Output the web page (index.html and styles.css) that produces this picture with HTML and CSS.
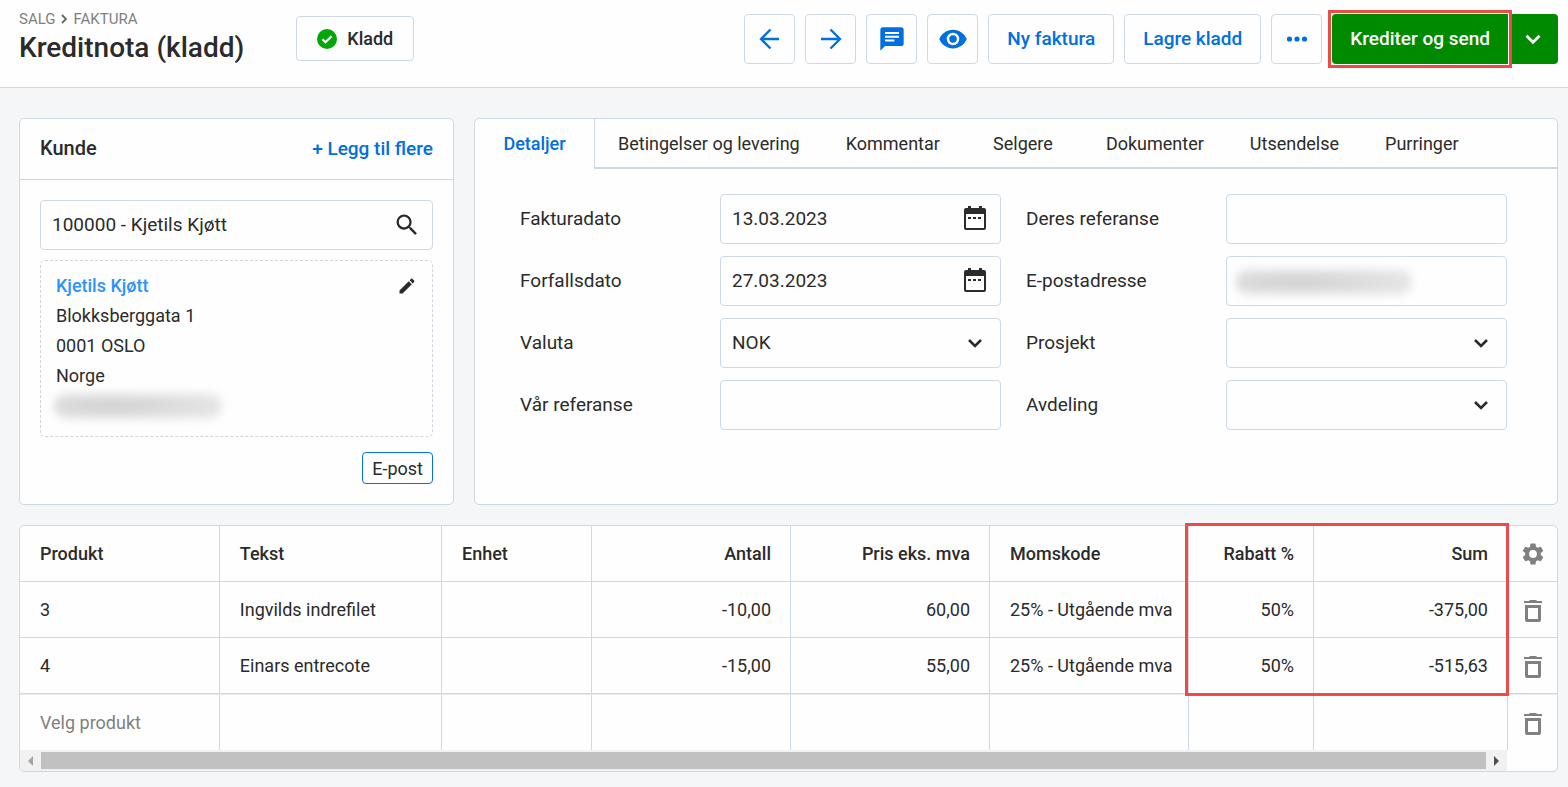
FILE: index.html
```html
<!DOCTYPE html>
<html lang="no">
  <head>
    <meta charset="UTF-8" />
    <meta name="viewport" content="width=device-width, initial-scale=1" />
    <title>Kreditnota (kladd)</title>
    <link rel="stylesheet" href="styles.css">
  </head>
  <body>
    <!-- Icons used more than once -->
    <svg class="sprite" aria-hidden="true">
      <symbol id="chevron" viewBox="0 0 24 24"><path d="M6 9l6 6 6-6" fill="none" stroke="currentColor" stroke-width="2.6" /></symbol>
      <symbol id="calendar" viewBox="0 0 24 26"><path fill="currentColor" d="M3 2h2V0h3v2h8V0h3v2h2q2 0 2 2v18q0 2-2 2H3q-2 0-2-2V4q0-2 2-2zm0 6v14h18V8zm2 3h3v2H5zm5 0h3v2h-3zm5 0h3v2h-3z" /></symbol>
      <symbol id="trash" viewBox="0 0 20 24"><path fill="currentColor" d="M1 2h5l1-1h6l1 1h5v2H1zM2 6h16v15q0 2-2 2H4q-2 0-2-2zm3 3v11h10V9z" /></symbol>
    </svg>

    <header class="topbar">
      <div class="page-title">
        <nav class="breadcrumb">
          <a href="#">SALG</a>
          <svg width="8" height="12" viewBox="0 0 8 12"><path d="M1 2l4 4-4 4" fill="none" stroke="#666" stroke-width="1.8" /></svg>
          <a href="#">FAKTURA</a>
        </nav>
        <h1>Kreditnota (kladd)</h1>
      </div>
      <div class="status">
        <svg width="20" height="20" viewBox="0 0 20 20"><circle cx="10" cy="10" r="10" fill="#00a70b" /><path d="M5.5 10.2l3 3 6-6" fill="none" stroke="#fff" stroke-width="2.2" /></svg>
        <span>Kladd</span>
      </div>

      <div class="actions">
        <button class="btn icon-btn" aria-label="Forrige">
          <svg width="24" height="24" viewBox="0 0 24 24"><path d="M21 12H3.500M12.500 2.500L3 12l9.500 9.500" fill="none" stroke="currentColor" stroke-width="2.300" /></svg>
        </button>
        <button class="btn icon-btn" aria-label="Neste">
          <svg width="24" height="24" viewBox="0 0 24 24"><path d="M2 12h18.500M11.500 2.500L21 12l-9.500 9.500" fill="none" stroke="currentColor" stroke-width="2.300" /></svg>
        </button>
        <button class="btn icon-btn" aria-label="Kommentarer">
          <svg width="28" height="28" viewBox="0 0 24 24"><path fill="currentColor" d="M20 2H4c-1.100 0-2 .9-2 2v18l4-4h14c1.100 0 2-.9 2-2V4c0-1.100-.9-2-2-2zM6 6h12v1.800H6zm0 3.200h12V11H6zm8 5H6v-1.800h8z" /></svg>
        </button>
        <button class="btn icon-btn" aria-label="Forhåndsvis">
          <svg width="30" height="30" viewBox="0 0 24 24"><path fill="currentColor" d="M12 4.500C7 4.500 2.730 7.610 1 12c1.730 4.390 6 7.500 11 7.500s9.270-3.110 11-7.500c-1.730-4.390-6-7.500-11-7.500zM12 17a5 5 0 1 1 0-10 5 5 0 0 1 0 10zm0-8a3 3 0 1 0 0 6 3 3 0 0 0 0-6z" /></svg>
        </button>
        <button class="btn">Ny faktura</button>
        <button class="btn">Lagre kladd</button>
        <button class="btn icon-btn" aria-label="Mer">
          <svg width="22" height="6" viewBox="0 0 22 6" fill="currentColor"><circle cx="3.500" cy="3" r="2.600" /><circle cx="11" cy="3" r="2.600" /><circle cx="18.500" cy="3" r="2.600" /></svg>
        </button>
        <div class="split">
          <button class="primary primary-main">Krediter og send</button>
          <button class="primary primary-more" aria-label="Flere valg">
            <svg width="26" height="26"><use href="#chevron" /></svg>
          </button>
        </div>
      </div>
    </header>

    <main>
      <section class="card customer">
        <div class="card-head">
          <h2>Kunde</h2>
          <a href="#">+ Legg til flere</a>
        </div>
        <div class="customer-body">
          <div class="field">
            <input type="text" aria-label="Kunde" value="100000 - Kjetils Kjøtt" />
            <svg class="field-icon" width="28" height="28" viewBox="0 0 24 24"><path fill="currentColor" d="M15.500 14h-.79l-.28-.27A6.470 6.470 0 0 0 16 9.500 6.500 6.500 0 1 0 9.500 16c1.610 0 3.090-.59 4.230-1.570l.27.28v.79l5 4.990L20.490 19zm-6 0C7.010 14 5 11.990 5 9.500S7.010 5 9.500 5 14 7.010 14 9.500 11.990 14 9.500 14z" /></svg>
          </div>
          <div class="address">
            <div class="address-name">
              <a href="#">Kjetils Kjøtt</a>
              <button class="edit" aria-label="Rediger">
                <svg width="20" height="20" viewBox="0 0 24 24"><path fill="currentColor" d="M3 17.250V21h3.750L17.810 9.940l-3.750-3.750zM20.710 7.040a1 1 0 0 0 0-1.410l-2.340-2.340a1 1 0 0 0-1.410 0l-1.830 1.830 3.750 3.750z" /></svg>
              </button>
            </div>
            <div>Blokksberggata 1</div>
            <div>0001 OSLO</div>
            <div>Norge</div>
            <div class="hidden-line"><span class="smudge"></span></div>
          </div>
          <button class="tag">E-post</button>
        </div>
      </section>

      <section class="card details">
        <nav class="tabs">
          <a class="tab active" href="#">Detaljer</a>
          <a class="tab" href="#">Betingelser og levering</a>
          <a class="tab" href="#">Kommentar</a>
          <a class="tab" href="#">Selgere</a>
          <a class="tab" href="#">Dokumenter</a>
          <a class="tab" href="#">Utsendelse</a>
          <a class="tab" href="#">Purringer</a>
        </nav>
        <form class="form">
          <div class="form-row">
            <label for="fakturadato">Fakturadato</label>
            <div class="field">
              <input type="text" id="fakturadato" value="13.03.2023" />
              <svg class="field-icon" width="24" height="26"><use href="#calendar" /></svg>
            </div>
          </div>
          <div class="form-row">
            <label for="deres">Deres referanse</label>
            <div class="field"><input type="text" id="deres" /></div>
          </div>
          <div class="form-row">
            <label for="forfallsdato">Forfallsdato</label>
            <div class="field">
              <input type="text" id="forfallsdato" value="27.03.2023" />
              <svg class="field-icon" width="24" height="26"><use href="#calendar" /></svg>
            </div>
          </div>
          <div class="form-row">
            <label for="epost">E-postadresse</label>
            <div class="field">
              <input type="text" id="epost" />
              <span class="smudge field-smudge"></span>
            </div>
          </div>
          <div class="form-row">
            <label for="valuta">Valuta</label>
            <div class="field">
              <select id="valuta"><option>NOK</option></select>
              <svg class="field-icon" width="24" height="24"><use href="#chevron" /></svg>
            </div>
          </div>
          <div class="form-row">
            <label for="prosjekt">Prosjekt</label>
            <div class="field">
              <select id="prosjekt"><option></option></select>
              <svg class="field-icon" width="24" height="24"><use href="#chevron" /></svg>
            </div>
          </div>
          <div class="form-row">
            <label for="var-ref">Vår referanse</label>
            <div class="field"><input type="text" id="var-ref" /></div>
          </div>
          <div class="form-row">
            <label for="avdeling">Avdeling</label>
            <div class="field">
              <select id="avdeling"><option></option></select>
              <svg class="field-icon" width="24" height="24"><use href="#chevron" /></svg>
            </div>
          </div>
        </form>
      </section>

      <section class="card lines">
        <table>
          <colgroup>
            <col class="col-product" />
            <col class="col-text" />
            <col class="col-unit" />
            <col class="col-number" />
            <col class="col-number" />
            <col class="col-number" />
            <col class="col-discount" />
            <col class="col-sum" />
            <col class="col-tools" />
          </colgroup>
          <thead>
            <tr>
              <th>Produkt</th>
              <th>Tekst</th>
              <th>Enhet</th>
              <th class="num">Antall</th>
              <th class="num">Pris eks. mva</th>
              <th>Momskode</th>
              <th class="num">Rabatt %</th>
              <th class="num">Sum</th>
              <th class="tools">
                <button class="tool" aria-label="Innstillinger">
                  <svg width="26" height="26" viewBox="0 0 24 24"><path fill="currentColor" d="M19.140 12.940c.04-.3.06-.61.06-.94s-.02-.64-.07-.94l2.030-1.580a.49.49 0 0 0 .12-.61l-1.920-3.320a.49.49 0 0 0-.59-.22l-2.390.96a7 7 0 0 0-1.620-.94l-.36-2.540a.48.48 0 0 0-.48-.41h-3.840a.47.47 0 0 0-.47.41l-.36 2.540c-.59.24-1.130.57-1.620.94l-2.390-.96a.48.48 0 0 0-.59.22L2.740 8.870a.48.48 0 0 0 .12.61l2.030 1.580c-.05.3-.09.63-.09.94s.02.64.07.94l-2.030 1.580a.49.49 0 0 0-.12.61l1.920 3.320c.12.22.37.29.59.22l2.390-.96c.5.38 1.030.7 1.620.94l.36 2.540c.05.24.24.41.48.41h3.840c.24 0 .44-.17.47-.41l.36-2.540a7 7 0 0 0 1.620-.94l2.390.96c.22.080.47 0 .59-.22l1.920-3.320a.48.48 0 0 0-.12-.61zM12 15.600a3.600 3.600 0 1 1 0-7.200 3.600 3.600 0 0 1 0 7.200z" /></svg>
                </button>
              </th>
            </tr>
          </thead>
          <tbody>
            <tr>
              <td>3</td>
              <td>Ingvilds indrefilet</td>
              <td></td>
              <td class="num">-10,00</td>
              <td class="num">60,00</td>
              <td>25% - Utgående mva</td>
              <td class="num">50%</td>
              <td class="num">-375,00</td>
              <td class="tools"><button class="tool" aria-label="Slett linje"><svg width="20" height="24"><use href="#trash" /></svg></button></td>
            </tr>
            <tr>
              <td>4</td>
              <td>Einars entrecote</td>
              <td></td>
              <td class="num">-15,00</td>
              <td class="num">55,00</td>
              <td>25% - Utgående mva</td>
              <td class="num">50%</td>
              <td class="num">-515,63</td>
              <td class="tools"><button class="tool" aria-label="Slett linje"><svg width="20" height="24"><use href="#trash" /></svg></button></td>
            </tr>
            <tr class="new-line">
              <td><input type="text" aria-label="Produkt" placeholder="Velg produkt" /></td>
              <td></td>
              <td></td>
              <td></td>
              <td></td>
              <td></td>
              <td></td>
              <td></td>
              <td class="tools"><button class="tool" aria-label="Slett linje"><svg width="20" height="24"><use href="#trash" /></svg></button></td>
            </tr>
          </tbody>
        </table>
        <div class="scrollbar">
          <svg width="21" height="10" viewBox="0 0 21 10"><path d="M13 0v10L8 5z" fill="#a3a3a3" /></svg>
          <div class="thumb"></div>
          <svg width="21" height="10" viewBox="0 0 21 10"><path d="M8 0v10l5-5z" fill="#505050" /></svg>
        </div>
        <div class="highlight"></div>
      </section>
    </main>
  </body>
</html>
```

FILE: styles.css
```css
* {
  box-sizing: border-box;
}
body {
  margin: 0;
  background-color: #f4f6f8;
  color: #2b2b2b;
  font-family: Roboto, "Liberation Sans", sans-serif;
  font-size: 18px;
}
a {
  color: #006fe0;
  text-decoration: none;
}
button,
input,
select {
  font: inherit;
  color: inherit;
}
button {
  cursor: pointer;
}
svg {
  display: block;
}
.sprite {
  display: none;
}

/* Top bar */
.topbar {
  display: flex;
  align-items: flex-start;
  min-height: 88px;
  padding: 0 10px 0 19px;
  background-color: #fefefe;
  border-bottom: 1px solid #cfd9e4;
}
.page-title {
  padding-top: 10px;
}
.breadcrumb {
  display: flex;
  align-items: center;
  gap: 5px;
  font-size: 15px;
  line-height: 18px;
}
.breadcrumb a {
  color: #808080;
}
h1 {
  margin: 0;
  font-size: 28px;
  font-weight: 500;
  line-height: 40px;
}
.status {
  display: flex;
  align-items: center;
  gap: 10px;
  height: 45px;
  margin: 16px 0 0 52px;
  padding: 0 20px;
  border: 1px solid #cfd9e4;
  border-radius: 4px;
  font-weight: 500;
}
.actions {
  display: flex;
  gap: 10px;
  margin: 14px 0 0 auto;
  font-size: 19px;
}
.btn {
  height: 50px;
  padding: 0 18px 2px;
  background-color: #fefefe;
  border: 1px solid #cfd9e4;
  border-radius: 4px;
  color: #006fe0;
  font-weight: 500;
}
.icon-btn {
  display: flex;
  align-items: center;
  justify-content: center;
  width: 51px;
  padding: 0;
}
.split {
  display: flex;
  gap: 4px;
}
.primary {
  height: 50px;
  border: none;
  background-color: #008a00;
  color: #fff;
  font-weight: 500;
}
.primary-main {
  position: relative;
  padding: 0 18px 2px;
  border-radius: 4px 0 0 4px;
}
.primary-main::after {
  content: "";
  position: absolute;
  inset: -4px;
  border: 3px solid #ec4b47;
}
.primary-more {
  display: flex;
  align-items: center;
  justify-content: center;
  width: 46px;
  padding: 0 4px 0 0;
  border-radius: 0 4px 4px 0;
}

/* Cards */
main {
  display: grid;
  grid-template-columns: 435px 1fr;
  gap: 20px;
  padding: 30px 10px 15px 19px;
}
.card {
  background-color: #fefefe;
  border: 1px solid #cfd9e4;
  border-radius: 5px;
}
.card-head {
  display: flex;
  align-items: center;
  justify-content: space-between;
  height: 61px;
  padding: 0 20px 2px;
  border-bottom: 1px solid #cfd9e4;
  font-size: 19px;
  font-weight: 500;
}
h2 {
  margin: 0;
  font-size: 20px;
  font-weight: 500;
}
.customer-body {
  display: flex;
  flex-direction: column;
  gap: 10px;
  padding: 20px;
}
.field {
  position: relative;
}
.field input,
.field select {
  display: block;
  width: 100%;
  height: 50px;
  padding: 0 11px 2px;
  background-color: #fefefe;
  border: 1px solid #cfd9e4;
  border-radius: 4px;
  font-size: 19px;
  appearance: none;
}
.field-icon {
  position: absolute;
  top: 50%;
  right: 14px;
  transform: translateY(-50%);
  pointer-events: none;
}
.customer .field-icon {
  right: 12px;
}
.address {
  padding: 10px 15px 15px;
  border: 1px dashed #cfd4e0;
  border-radius: 5px;
  line-height: 30px;
}
.address-name {
  display: flex;
  align-items: center;
  justify-content: space-between;
  font-weight: 500;
}
.address-name a {
  color: #2b93fb;
}
.edit {
  padding: 0;
  border: none;
  background: none;
}
.hidden-line {
  display: flex;
  align-items: center;
  height: 30px;
}
/* Blurred personal data */
.smudge {
  width: 168px;
  height: 26px;
  border-radius: 13px;
  background: radial-gradient(ellipse at 35% 50%, #d0d0d0, #e2e2e2 60%, #ececec);
  filter: blur(4px);
}
.hidden-line .smudge {
  margin-left: -2px;
}
.field-smudge {
  position: absolute;
  top: 13px;
  left: 10px;
  width: 176px;
}
.tag {
  align-self: flex-end;
  height: 32px;
  margin-top: 5px;
  padding: 0 9px;
  background-color: #fefefe;
  border: 1px solid #0073e0;
  border-radius: 4px;
}

/* Tabs and form */
.tabs {
  display: flex;
  height: 50px;
}
.tab {
  min-width: 120px;
  padding: 0 23px;
  border-bottom: 2px solid #cfd9e4;
  color: #2b2b2b;
  line-height: 50px;
  text-align: center;
}
.tab:last-child {
  flex: 1;
  text-align: left;
}
.tab.active {
  border-right: 1px solid #cfd9e4;
  border-bottom: none;
  color: #006fe0;
  font-weight: 500;
}
.form {
  display: grid;
  grid-template-columns: 1fr 1fr;
  gap: 12px 25px;
  padding: 25px 50px 25px 45px;
}
.form-row {
  display: grid;
  grid-template-columns: 200px 1fr;
  align-items: center;
}
.form-row label {
  padding-bottom: 2px;
  font-size: 19px;
}

/* Invoice lines */
.lines {
  position: relative;
  grid-column: 1 / -1;
}
table {
  width: 100%;
  table-layout: fixed;
  border-collapse: separate;
  border-spacing: 0;
}
.col-product {
  width: 13%;
}
.col-number {
  width: 199px;
}
.col-unit {
  width: 150px;
}
.col-discount {
  width: 125px;
}
.col-sum {
  width: 194px;
}
.col-tools {
  width: 49px;
}
th,
td {
  height: 56px;
  padding: 0 20px;
  border-right: 1px solid #cfd9e4;
  border-bottom: 1px solid #cfd9e4;
  text-align: left;
  white-space: nowrap;
}
th {
  font-weight: 500;
}
th.num,
td.num {
  padding-right: 19px;
  text-align: right;
}
th.tools,
td.tools {
  padding: 0;
  border-right: none;
}
.tool {
  display: flex;
  align-items: center;
  justify-content: center;
  width: 100%;
  height: 50px;
  padding: 0;
  border: none;
  background: none;
  color: #808080;
}
td .tool {
  padding-top: 2px;
}
.new-line td {
  border-top: 1px solid #e6ebf0;
  border-bottom: none;
}
.new-line input {
  width: 100%;
  padding: 0;
  border: none;
  background: none;
}
.new-line input::placeholder {
  color: #808080;
}
.scrollbar {
  display: flex;
  align-items: center;
  height: 21px;
  margin-right: 50px;
  background-color: #f1f1f1;
  border-radius: 0 0 0 4px;
}
.thumb {
  flex: 1;
  height: 17px;
  background-color: #c1c1c1;
}
.highlight {
  position: absolute;
  top: -3px;
  right: 48px;
  width: 324px;
  height: 173px;
  border: 3px solid #ec4b47;
  pointer-events: none;
}
```
